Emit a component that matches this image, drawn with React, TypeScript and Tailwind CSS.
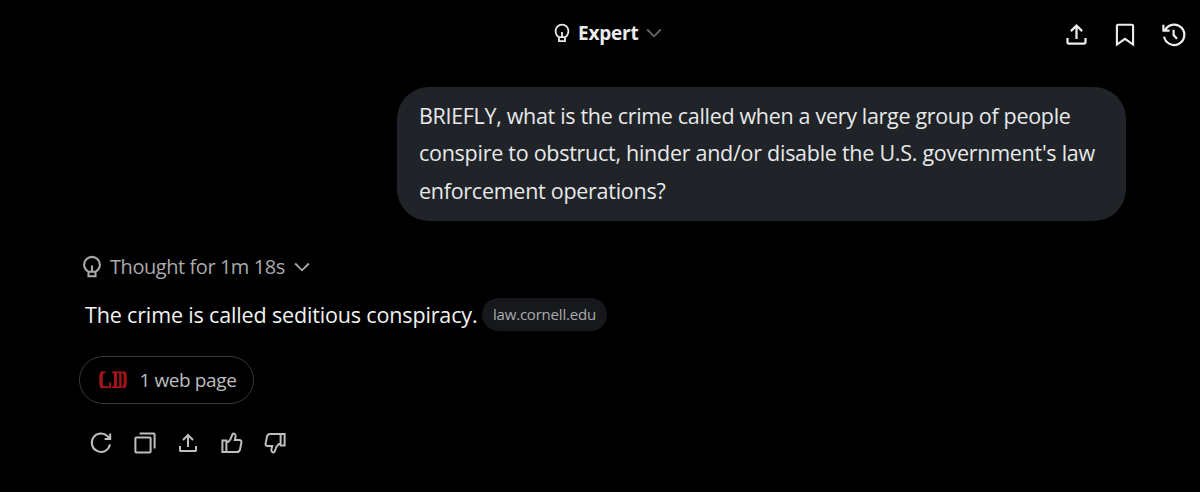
import React from 'react';

interface IconProps {
  className?: string;
}

interface StrokeIconProps extends IconProps {
  width: number;
  height: number;
  strokeWidth?: number;
  children: React.ReactNode;
}

// Each icon is drawn at its own pixel size
const StrokeIcon: React.FC<StrokeIconProps> = ({ width, height, strokeWidth = 2, className, children }) => (
  <svg
    width={width}
    height={height}
    viewBox={`0 0 ${width} ${height}`}
    fill="none"
    stroke="currentColor"
    strokeWidth={strokeWidth}
    className={`shrink-0 ${className ?? ''}`}
  >
    {children}
  </svg>
);

const BulbSmall = () => (
  <StrokeIcon width={16} height={20} strokeWidth={1.8}>
    <path d="M5 18.2V14.2C3 13 1.6 10.8 1.6 8A6.4 6.4 0 0 1 14.4 8C14.4 10.8 13 13 11 14.2V18.2zM5 14.2H11M8 9V14" />
  </StrokeIcon>
);

const BulbLarge = () => (
  <StrokeIcon width={20} height={24} strokeWidth={2.1}>
    <path d="M6.5 21.2V16.8C3.8 15.2 2.1 12.8 2.1 9.6A7.9 7.7 0 0 1 17.9 9.6C17.9 12.8 16.2 15.2 13.5 16.8V21.2zM6.5 16.8H13.5M10 10.6V16.6" />
  </StrokeIcon>
);

const UploadIcon: React.FC<{ size: number }> = ({ size }) => (
  <svg width={size} height={size} viewBox="0 0 24 24" fill="currentColor" className="shrink-0">
    <path d="M12 2.59l5.7 5.7-1.41 1.42L13 6.41V16h-2V6.41l-3.3 3.3-1.41-1.42L12 2.59zM21 15l-.02 4.2c0 1-.8 1.8-1.8 1.8H4.8C3.8 21 3 20.2 3 19.2V15h2v4h14v-4h2z" />
  </svg>
);

const BookmarkIcon = () => (
  <StrokeIcon width={20} height={24} strokeWidth={2.1}>
    <path d="M1.9 3Q1.9 1.7 3.2 1.7H16.8Q18.1 1.7 18.1 3V21.6L10 15.9L1.9 21.6z" />
  </StrokeIcon>
);

const HistoryIcon = () => (
  <StrokeIcon width={26} height={26} strokeWidth={2.2}>
    <path d="M3.1 14.6A10.2 10.2 0 1 0 4.6 7.2L3.6 8.6M2.4 2.8V8.7H8.6M12.6 7.8V13L16 16.8" />
  </StrokeIcon>
);

const RefreshIcon = () => (
  <StrokeIcon width={24} height={24} strokeWidth={2}>
    <path d="M21 13.4A9.2 9.2 0 1 1 18.5 5.2L20.6 7.3M21.2 2.4V8H15.6" />
  </StrokeIcon>
);

const CopyIcon = () => (
  <StrokeIcon width={24} height={24} strokeWidth={2}>
    <rect x="2.4" y="6.6" width="15.2" height="15" rx="1" />
    <path d="M6.6 2.6H20.6Q21.6 2.6 21.6 3.6V17.6" />
  </StrokeIcon>
);

const ThumbUpIcon: React.FC<IconProps> = ({ className }) => (
  <StrokeIcon width={24} height={24} strokeWidth={2} className={className}>
    <path d="M2.4 9.6H6.4V21H2.4zM6.4 11.4L8.4 10.8Q10.6 9 11.4 6L12.4 3.4Q13.4 2 14.8 3Q16 4 15.6 6L14.8 9H19.2Q21.8 9.2 21.4 11.4L20 18.6Q19.2 21 17 21H6.4" />
  </StrokeIcon>
);

const Chevron: React.FC<IconProps> = ({ className }) => (
  <StrokeIcon width={16} height={10} strokeWidth={1.8} className={className}>
    <path d="M1.2 1.5L8 8.3L14.8 1.5" />
  </StrokeIcon>
);

const SourceLogo = () => (
  <svg width="30" height="18" viewBox="0 0 30 18" fill="none" stroke="#a5141a" className="shrink-0">
    <path strokeWidth="3.4" d="M4.8 1.2Q3 2.4 3 5V12.4Q3 14.8 4.6 16" />
    <path strokeWidth="1.8" d="M4 1.3H7.4M2 16.2H12.2V11.2M14 1.3H24.6M14 16.2H24.6" />
    <path strokeWidth="3" d="M17.4 1.5V16" />
    <path strokeWidth="2.4" d="M22.4 1.5V16" />
    <path strokeWidth="3" d="M25 1.2Q27.2 2 27.2 5V12.4Q27.2 15.4 25 16.2" />
  </svg>
);

const Header = () => (
  <header className="flex h-[68px] items-start justify-between">
    <button className="ml-[554px] mt-[22px] flex h-[22px] items-center">
      <BulbSmall />
      <span className="ml-2 w-[60px] whitespace-nowrap text-[19px] font-bold leading-[22px] tracking-[-0.2px] text-[#eceded]">
        Expert
      </span>
      <Chevron className="ml-2 text-[#65686b]" />
    </button>
    <div className="mr-[13px] mt-[21px] flex items-center text-[#eceded]">
      <UploadIcon size={27} />
      <div className="ml-[25px] mr-[26px]">
        <BookmarkIcon />
      </div>
      <HistoryIcon />
    </div>
  </header>
);

export default function App() {
  return (
    <div className="h-[492px] w-[1200px] overflow-hidden bg-black font-['Open_Sans',sans-serif] font-[450] text-[#e7e9ea]">
      <Header />
      <main>
        <div className="ml-[397px] mt-[19px] h-[134px] w-[729px] whitespace-nowrap rounded-[32px] bg-[#202327] px-[22px] pt-[9.8px] text-[21.5px] leading-[37.5px]">
          <p className="tracking-[-0.32px]">BRIEFLY, what is the crime called when a very large group of people</p>
          <p className="tracking-[-0.27px]">conspire to obstruct, hinder and/or disable the U.S. government's law</p>
          <p className="tracking-[-0.27px]">enforcement operations?</p>
        </div>

        <div className="ml-[82px] mt-[33px] flex h-[26px] items-center text-[#aaaaac]">
          <BulbLarge />
          <span className="ml-2 w-[175px] whitespace-nowrap text-[20px] leading-[26px] tracking-[-0.44px]">
            Thought for 1m 18s
          </span>
          <Chevron className="ml-[9px]" />
        </div>

        <div className="ml-[85px] mt-[18px] flex h-[33px] items-center">
          <p className="w-[397px] whitespace-nowrap text-[21.5px] leading-[33px] tracking-[-0.15px] text-[#f2f3f3]">
            The crime is called seditious conspiracy.
          </p>
          <a className="flex h-[33px] w-[125px] items-center whitespace-nowrap rounded-full bg-[#16181c] pl-[11px] text-[15px] tracking-[-0.2px] text-[#aaacae]">
            law.cornell.edu
          </a>
        </div>

        <button className="ml-[79px] mt-[25px] flex h-[48px] w-[175px] items-center rounded-full border border-[#38393b] pl-[18px] text-[#bdbebf]">
          <SourceLogo />
          <span className="ml-[11.5px] whitespace-nowrap text-[19px] tracking-[-0.4px]">1 web page</span>
        </button>

        <div className="ml-[89px] mt-[26px] flex items-center gap-[19.5px] pt-[0.5px] text-[#bdbebf]">
          <RefreshIcon />
          <CopyIcon />
          <UploadIcon size={24} />
          <ThumbUpIcon />
          <ThumbUpIcon className="rotate-180" />
        </div>
      </main>
    </div>
  );
}
